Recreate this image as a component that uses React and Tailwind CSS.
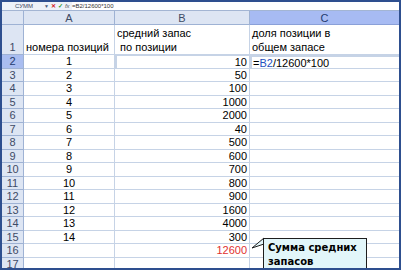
import React from "react";

const rows = [
  { n: 2, a: "1", b: "10" },
  { n: 3, a: "2", b: "50" },
  { n: 4, a: "3", b: "100" },
  { n: 5, a: "4", b: "1000" },
  { n: 6, a: "5", b: "2000" },
  { n: 7, a: "6", b: "40" },
  { n: 8, a: "7", b: "500" },
  { n: 9, a: "8", b: "600" },
  { n: 10, a: "9", b: "700" },
  { n: 11, a: "10", b: "800" },
  { n: 12, a: "11", b: "900" },
  { n: 13, a: "12", b: "1600" },
  { n: 14, a: "13", b: "4000" },
  { n: 15, a: "14", b: "300" },
  { n: 16, a: "", b: "12600", red: true },
  { n: 17, a: "", b: "" },
];

const cell = "border-r border-b border-[#c6d3e6] h-[13.5px] leading-[13px] px-[2px] overflow-visible whitespace-nowrap";
const head = "bg-[#dde5f3] border-r border-b border-[#9eb2d4] text-[#3d4b66] text-center";

export default function App() {
  return (
    <div className="relative w-[401px] h-[270px] overflow-hidden bg-white border-2 border-[#2e4f8f] font-['Liberation_Sans',Arial,sans-serif] text-[11px] text-black">
      {/* formula bar */}
      <div className="flex items-center h-[9px] bg-[#eef2f8] border-b border-[#a3b5d3] text-[6px] leading-[8px]">
        <div className="w-[42px] pl-[13px] text-[#3c4a60]">СУММ</div>
        <div className="flex items-center gap-[2px] w-[28px] text-[6px]">
          <span className="text-[#4a5a78] text-[5px]">▼</span>
          <span className="text-[#d42020] font-bold">✕</span>
          <span className="text-[#2e9a2e] font-bold">✓</span>
          <span className="italic text-[#555]">fx</span>
        </div>
        <div className="flex-1 bg-white h-full text-[#333]">=B2/12600*100</div>
      </div>

      <div className="grid grid-cols-[22px_91px_135px_1fr]">
        {/* column headers */}
        <div className={`${head} h-[14px]`}></div>
        <div className={`${head} h-[14px] leading-[14px]`}>A</div>
        <div className={`${head} h-[14px] leading-[14px]`}>B</div>
        <div className="bg-[#a7bbf3] border-b border-[#8aa0d8] h-[14px] leading-[14px] text-center text-[#243a6e]">C</div>

        {/* row 1 */}
        <div className={`${head} h-[30px] flex items-end justify-center leading-[14px]`}>1</div>
        <div className="border-r border-b border-[#c6d3e6] h-[30px] flex items-end px-[2px] leading-[14px]">номера позиций</div>
        <div className="border-r border-b border-[#c6d3e6] h-[30px] flex flex-col justify-end px-[2px] leading-[14px]">
          <span>средний запас</span>
          <span>&nbsp;по позиции</span>
        </div>
        <div className="border-b border-[#c6d3e6] h-[30px] flex flex-col justify-end px-[2px] leading-[14px]">
          <span>доля позиции в</span>
          <span>общем запасе</span>
        </div>

        {rows.map((r) => (
          <React.Fragment key={r.n}>
            <div
              className={`${r.n === 2 ? "bg-[#a9bdf0] text-[#243a6e]" : "bg-[#dde5f3] text-[#3d4b66]"} border-r border-b border-[#9eb2d4] h-[13.5px] leading-[13px] text-center`}
            >
              {r.n}
            </div>
            <div className={`${cell} text-center`}>{r.a}</div>
            <div
              className={`${cell} text-right ${r.red ? "text-[#e03030]" : ""} ${r.n === 2 ? "border border-[#2b55b8] border-l-2" : ""}`}
            >
              {r.b}
            </div>
            <div
              className={`${cell} border-r-0 ${r.n === 2 ? "border-2 border-[#202020] leading-[10px] pl-[1px]" : ""}`}
            >
              {r.n === 2 && (
                <span>
                  =<span className="text-[#2450c0]">B2</span>/12600*100
                </span>
              )}
            </div>
          </React.Fragment>
        ))}
      </div>

      {/* callout */}
      <svg className="absolute left-[246px] top-[235px]" width="20" height="14" viewBox="0 0 20 14">
        <polygon points="16,1 4,11 19,6" fill="#e2f6fa" stroke="#1e1e1e" strokeWidth="1" />
      </svg>
      <div className="absolute left-[261px] top-[236px] w-[104px] h-[40px] bg-[#e2f6fa] border border-[#1e1e1e] px-[4px] pt-[2px] font-['DejaVu_Sans',sans-serif] font-bold text-[10px] leading-[14px] text-black whitespace-nowrap">
        <div>Сумма средних</div>
        <div>запасов</div>
      </div>
    </div>
  );
}
